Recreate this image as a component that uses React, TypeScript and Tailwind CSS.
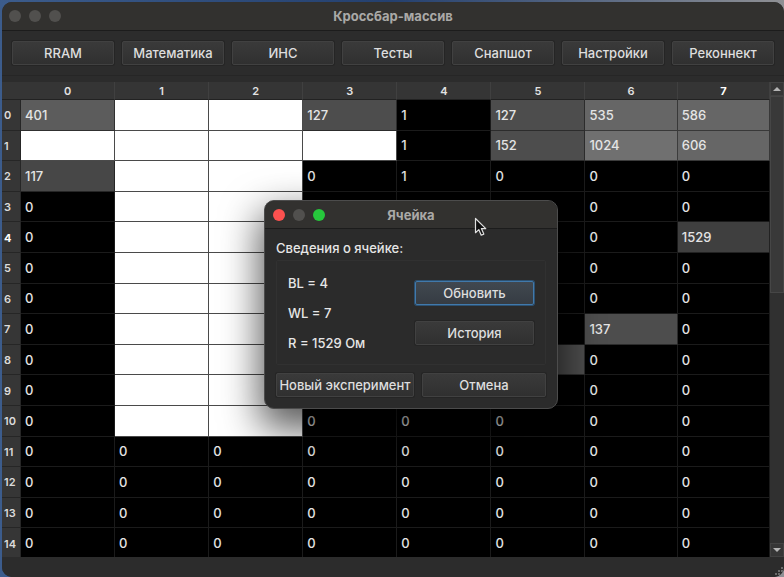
import React from "react";

const ACTIONS = ["RRAM", "Математика", "ИНС", "Тесты", "Снапшот", "Настройки", "Реконнект"];

// null marks a cell that is out of range and painted white,
// undefined one that has not been read yet
type Value = number | null | undefined;

const NONE = undefined;

const ROWS: Value[][] = [
  [401, null, null, 127, 1, 127, 535, 586],
  [null, null, null, null, 1, 152, 1024, 606],
  [117, null, null, 0, 1, 0, 0, 0],
  [0, null, null, NONE, NONE, NONE, 0, 0],
  [0, null, null, NONE, NONE, NONE, 0, 1529],
  [0, null, null, NONE, NONE, NONE, 0, 0],
  [0, null, null, NONE, NONE, NONE, 0, 0],
  [0, null, null, NONE, NONE, NONE, 137, 0],
  [0, null, null, NONE, NONE, 130, 0, 0],
  [0, null, null, NONE, NONE, NONE, 0, 0],
  [0, null, null, 0, 0, 0, 0, 0],
  [0, 0, 0, 0, 0, 0, 0, 0],
  [0, 0, 0, 0, 0, 0, 0, 0],
  [0, 0, 0, 0, 0, 0, 0, 0],
  [0, 0, 0, 0, 0, 0, 0, 0],
];

const SELECTED = { row: 4, col: 7 };

function cellStyle(value: Value) {
  if (value === null) return "bg-white border-[#4a4a4a]";
  if (value === undefined || value < 2) return "bg-black border-[#1b1b1b]";
  if (value === 1529) return "bg-[#3f3f3f] border-[#222222]";
  if (value < 120) return "bg-[#474747] border-[#262626]";
  if (value < 200) return "bg-[#4d4d4d] border-[#2c2c2c]";
  if (value < 500) return "bg-[#5c5c5c] border-[#303030]";
  if (value < 1000) return "bg-[#666666] border-[#383838]";
  return "bg-[#707070] border-[#3c3c3c]";
}

const BUTTON =
  "h-6 rounded-[2px] border border-[#414141] bg-linear-to-b from-[#3a3a3a] to-[#303030] text-[13px] leading-4 font-medium text-[#dedede] shadow-[0_0_0_1px_#252525]";

function Light({ label, color }: { label: string; color: string }) {
  return <button type="button" aria-label={label} className={`size-3 rounded-full ${color}`} />;
}

function Toolbar() {
  return (
    <nav className="grid grid-cols-7 gap-2 px-[10px] pt-[10px] pb-[10px]">
      {ACTIONS.map((name) => (
        <button key={name} type="button" className={BUTTON}>
          {name}
        </button>
      ))}
    </nav>
  );
}

function Matrix() {
  return (
    <table className="h-full w-full table-fixed border-separate border-spacing-0 text-left">
      <colgroup>
        <col className="w-[19px]" />
        <col span={6} className="w-[12.25%]" />
        <col span={2} />
      </colgroup>
      <thead className="text-[11px] leading-4 text-[#e2e2e2]">
        <tr className="h-[18px]">
          <td className="border-b border-[#222222] bg-[#353535] p-0" />
          {ROWS[0].map((_, col) => (
            <th
              key={col}
              scope="col"
              className={`border-r border-b border-r-[#404040] border-b-[#222222] bg-[#353535] px-0 pt-px pb-0 text-center ${
                col === SELECTED.col ? "font-bold text-white" : "font-semibold"
              }`}
            >
              {col}
            </th>
          ))}
        </tr>
      </thead>
      <tbody>
        {ROWS.map((cells, row) => (
          <tr key={row}>
            <th
              scope="row"
              className={`border-r border-b border-[#262626] bg-[#363636] pt-px pr-0 pb-0 pl-[2px] text-[11px] leading-4 ${
                row === SELECTED.row ? "font-bold text-white" : "font-semibold text-[#dcdcdc]"
              }`}
            >
              {row}
            </th>
            {cells.map((value, col) => (
              <td
                key={col}
                className={`border-r border-b py-0 pr-0 pl-1 text-[13px] leading-4 font-medium text-[#e4e4e4] ${cellStyle(value)}`}
              >
                {value}
              </td>
            ))}
          </tr>
        ))}
      </tbody>
    </table>
  );
}

function ScrollBar() {
  const arrow = "flex h-[14px] w-full items-center justify-center border border-[#424242] bg-[#363636]";
  return (
    <div className="flex w-[14px] shrink-0 flex-col bg-[#303030]">
      <button type="button" aria-label="Вверх" className={arrow}>
        <svg width="8" height="4" viewBox="0 0 8 4" fill="#b4b4b4" aria-hidden="true">
          <path d="M4 0 8 4H0z" />
        </svg>
      </button>
      <div className="flex-1">
        <div className="h-[44%] border border-[#464646] bg-[#393939]" />
      </div>
      <button type="button" aria-label="Вниз" className={arrow}>
        <svg width="8" height="4" viewBox="0 0 8 4" fill="#b4b4b4" aria-hidden="true">
          <path d="M0 0h8L4 4z" />
        </svg>
      </button>
    </div>
  );
}

function CellDialog() {
  return (
    <section
      role="dialog"
      aria-labelledby="cell-title"
      className="absolute top-[200px] left-[264px] w-[294px] overflow-hidden rounded-[10px] border border-[#4c4c4c] bg-[#2b2b2b] shadow-[0_16px_38px_4px_rgba(0,0,0,0.65)]"
    >
      <header className="relative flex h-7 items-center gap-2 border-b border-[#1c1c1c] bg-[#32312f] px-2">
        <Light label="Закрыть" color="bg-[#fc514f]" />
        <Light label="Свернуть" color="bg-[#51504e]" />
        <Light label="Развернуть" color="bg-[#26c73c]" />
        <h2
          id="cell-title"
          className="pointer-events-none absolute inset-x-0 text-center text-[13px] leading-4 font-bold text-[#aaa9a7]"
        >
          Ячейка
        </h2>
      </header>
      <div className="px-[11px] pt-[11px] pb-[11px] text-[13px] leading-4 font-medium text-[#e6e6e6]">
        <p>Сведения о ячейке:</p>
        <div className="mt-1 mb-2 flex h-[105px] items-center justify-between rounded-[2px] border border-[#313131] pr-[11px] pl-[11px]">
          <div className="flex flex-col gap-[14px]">
            <p>BL = 4</p>
            <p>WL = 7</p>
            <p>R = 1529 Ом</p>
          </div>
          <div className="flex w-[119px] flex-col gap-4">
            <button
              type="button"
              className="h-6 rounded-[2px] border border-[#4179ab] bg-linear-to-b from-[#414850] to-[#363c43] text-[13px] leading-4 font-medium text-[#dedede] shadow-[0_0_0_1px_#2c5172]"
            >
              Обновить
            </button>
            <button type="button" className={BUTTON}>
              История
            </button>
          </div>
        </div>
        <div className="flex gap-2">
          <button type="button" className={`${BUTTON} w-[138px] whitespace-nowrap`}>
            Новый эксперимент
          </button>
          <button type="button" className={`${BUTTON} flex-1`}>
            Отмена
          </button>
        </div>
      </div>
    </section>
  );
}

export default function App() {
  return (
    <div className="relative flex h-screen min-h-[577px] flex-col overflow-hidden bg-linear-to-r from-[#3c5c8c] via-[#24406f] to-[#8f9094] pt-[2px] pl-[2px] font-['Inter','Liberation_Sans',sans-serif]">
      <main className="flex flex-1 flex-col overflow-hidden rounded-[10px] bg-[#2c2c2c]">
        <header className="relative flex h-[29px] shrink-0 items-center gap-2 border-b border-[#1c1c1c] bg-[#32312f] px-[7px]">
          <Light label="Закрыть окно" color="bg-[#51504e]" />
          <Light label="Свернуть окно" color="bg-[#51504e]" />
          <Light label="Развернуть окно" color="bg-[#51504e]" />
          <h1 className="pointer-events-none absolute inset-x-0 text-center text-[13px] leading-4 font-bold text-[#aaa9a7]">
            Кроссбар-массив
          </h1>
        </header>
        <Toolbar />
        <div className="h-[7px] shrink-0 border-t border-[#262626]" />
        <div className="flex flex-1">
          <div className="-mb-[2px] flex-1">
            <Matrix />
          </div>
          <ScrollBar />
        </div>
        <footer className="relative flex h-5 shrink-0 items-end justify-end bg-[#2c2c2c]">
          <svg width="10" height="10" viewBox="0 0 10 10" fill="#6a6a6a" aria-hidden="true">
            <path d="M7 0h2v2H7zM4 3h2v2H4zM7 3h2v2H7zM1 6h2v2H1zM4 6h2v2H4zM7 6h2v2H7z" />
          </svg>
        </footer>
      </main>
      <CellDialog />
      <svg
        className="absolute top-[217px] left-[474px]"
        width="13"
        height="20"
        viewBox="0 0 13 20"
        aria-hidden="true"
      >
        <path
          d="M1.5 1.5v14.2l3.3-3.1 2.4 5.6 2.6-1.1-2.4-5.5h4.4z"
          fill="#111111"
          stroke="#e0e0e0"
          strokeWidth="1.2"
          strokeLinejoin="round"
        />
      </svg>
    </div>
  );
}
